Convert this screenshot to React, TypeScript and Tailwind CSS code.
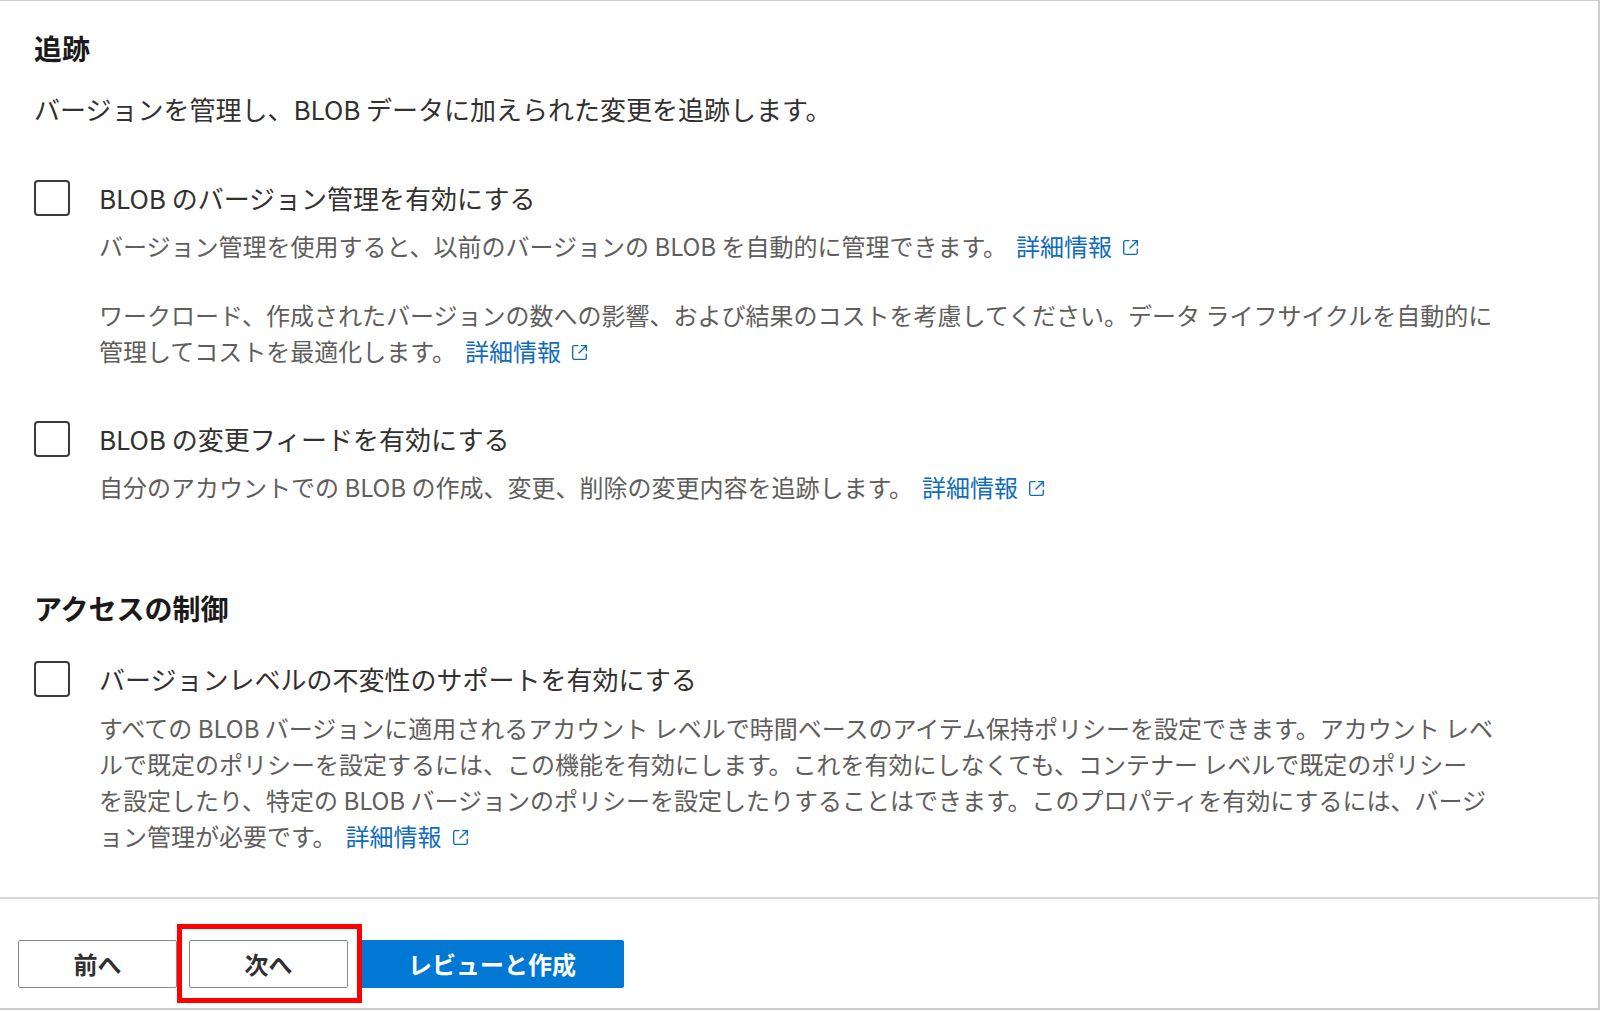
const font = { fontFamily: '"Noto Sans CJK JP", "Noto Sans", sans-serif' }

function ExternalIcon() {
    return (
        <svg width="21" height="21" viewBox="0 0 20 20" fill="none" stroke="currentColor" strokeWidth="1.3" strokeLinecap="round" strokeLinejoin="round" className="inline-block ml-2 -mt-1">
            <path d="M8.5 3.5H5a1.5 1.5 0 0 0-1.5 1.5v10A1.5 1.5 0 0 0 5 16.5h10a1.5 1.5 0 0 0 1.5-1.5v-3.5" />
            <path d="M12 3.5h4.5V8" />
            <path d="M16.5 3.5 9.5 10.5" />
        </svg>
    )
}

function LearnMore() {
    return (
        <a href="#" className="text-[#0f6cbd] whitespace-nowrap ml-[9px]">
            詳細情報
            <ExternalIcon />
        </a>
    )
}

function Checkbox() {
    return <span className="block w-[36px] h-[36px] shrink-0 border-2 border-[#3b3a39] rounded-[4px] bg-white" />
}

function CheckRow({ label }: { label: string }) {
    return (
        <div className="flex items-start">
            <Checkbox />
            <span className="ml-[29px] text-[26px] leading-[36px] text-[#323130]">{label}</span>
        </div>
    )
}

function Note({ children, className = '' }: { children: React.ReactNode; className?: string }) {
    return <p className={`pl-[65px] text-[24px] leading-[36px] text-[#605e5c] whitespace-nowrap ${className}`}>{children}</p>
}

export default function App() {
    return (
        <div className="w-[1600px] h-[1011px] bg-white overflow-hidden" style={font}>
            <div className="h-[1010px] border-t border-r-2 border-b-2 border-[#cfcfcf] flex flex-col">
                {/* Content */}
                <div className="h-[896px] pl-[34px]">
                    <h2 className="pt-[27px] text-[28px] leading-[40px] font-bold text-[#1b1a19]">追跡</h2>
                    <p className="mt-[23px] text-[26px] leading-[36px] text-[#323130]">
                        バージョンを管理し、BLOB データに加えられた変更を追跡します。
                    </p>

                    <div className="mt-[53px]">
                        <CheckRow label="BLOB のバージョン管理を有効にする" />
                    </div>
                    <Note className="mt-[12px]">
                        バージョン管理を使用すると、以前のバージョンの BLOB を自動的に管理できます。
                        <LearnMore />
                    </Note>
                    <Note className="mt-[33px]">
                        ワークロード、作成されたバージョンの数への影響、および結果のコストを考慮してください。データ ライフサイクルを自動的に
                        <br />
                        管理してコストを最適化します。
                        <LearnMore />
                    </Note>

                    <div className="mt-[52px]">
                        <CheckRow label="BLOB の変更フィードを有効にする" />
                    </div>
                    <Note className="mt-[12px]">
                        自分のアカウントでの BLOB の作成、変更、削除の変更内容を追跡します。
                        <LearnMore />
                    </Note>

                    <h2 className="mt-[83px] text-[28px] leading-[40px] font-bold text-[#1b1a19]">アクセスの制御</h2>
                    <div className="mt-[33px]">
                        <CheckRow label="バージョンレベルの不変性のサポートを有効にする" />
                    </div>
                    <Note className="mt-[13px]">
                        すべての BLOB バージョンに適用されるアカウント レベルで時間ベースのアイテム保持ポリシーを設定できます。アカウント レベ
                        <br />
                        ルで既定のポリシーを設定するには、この機能を有効にします。これを有効にしなくても、コンテナー レベルで既定のポリシー
                        <br />
                        を設定したり、特定の BLOB バージョンのポリシーを設定したりすることはできます。このプロパティを有効にするには、バージ
                        <br />
                        ョン管理が必要です。
                        <LearnMore />
                    </Note>
                </div>

                {/* Footer */}
                <div className="flex-1 border-t-2 border-[#d6d6d6] pt-[41px] pl-[18px]">
                    <div className="flex items-start gap-[12px]">
                        <button className="w-[159px] h-[48px] border border-[#8a8886] rounded-[2px] bg-white text-[24px] font-bold text-[#323130]">
                            前へ
                        </button>
                        <div className="relative">
                            <button className="w-[159px] h-[48px] border border-[#8a8886] rounded-[2px] bg-white text-[24px] font-bold text-[#323130]">
                                次へ
                            </button>
                            <span className="absolute -left-[12px] -top-[16px] -right-[14px] -bottom-[15px] border-[5px] border-[#ff0000] pointer-events-none" />
                        </div>
                        <button className="w-[264px] h-[48px] rounded-[2px] bg-[#0078d4] text-[24px] font-bold text-white">
                            レビューと作成
                        </button>
                    </div>
                </div>
            </div>
        </div>
    )
}
